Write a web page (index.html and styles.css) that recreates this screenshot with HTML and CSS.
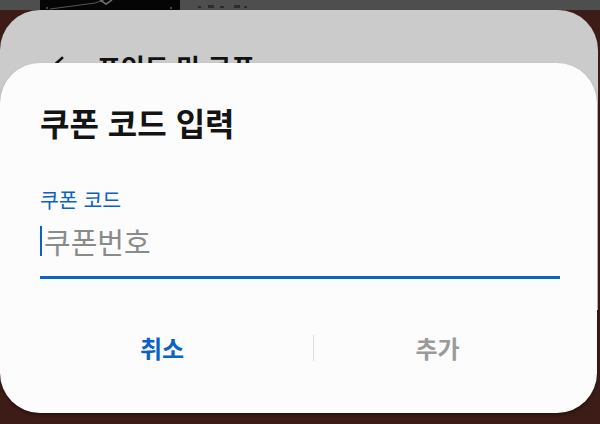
FILE: index.html
```html
<!DOCTYPE html>
<html lang="ko">
<head>
    <meta charset="UTF-8">
    <meta name="viewport" content="width=device-width, initial-scale=1.0">
    <title>쿠폰 코드 입력</title>
    <link rel="stylesheet" href="styles.css">
</head>
<body>
    <div class="screen">
        <div class="top-strip">
            <div class="thumb">
                <svg width="140" height="10" viewBox="0 0 140 10">
                    <path d="M10 9 L55 3 L64 0" stroke="#555" stroke-width="1" fill="none"/>
                    <path d="M60 0 L66 4 L72 0" stroke="#777" stroke-width="1.5" fill="none"/>
                    <rect x="6" y="7" width="2" height="2" fill="#444"/>
                    <rect x="130" y="7" width="2" height="2" fill="#444"/>
                </svg>
            </div>
            <svg class="top-marks" width="60" height="10" viewBox="0 0 60 10">
                <rect x="2" y="6" width="3" height="2" fill="#2c2c2c"/>
                <rect x="12" y="5" width="6" height="3" fill="#2c2c2c"/>
                <rect x="24" y="6" width="4" height="2" fill="#2c2c2c"/>
                <rect x="38" y="5" width="6" height="3" fill="#2c2c2c"/>
                <rect x="48" y="6" width="3" height="2" fill="#2c2c2c"/>
            </svg>
        </div>

        <div class="sheet">
            <div class="sheet-header">
                <svg class="back" width="20" height="26" viewBox="0 0 20 26">
                    <path d="M14 3 L3 13 L14 23" stroke="#111" stroke-width="2.6" fill="none" stroke-linecap="square"/>
                </svg>
                <span class="sheet-title">포인트 및 쿠폰</span>
            </div>
        </div>

        <div class="dialog">
            <h1 class="dialog-title">쿠폰 코드 입력</h1>

            <div class="field">
                <label class="field-label">쿠폰 코드</label>
                <div class="field-input">
                    <span class="caret"></span>
                    <span class="placeholder">쿠폰번호</span>
                </div>
            </div>

            <div class="actions">
                <button class="action action-cancel">취소</button>
                <span class="action-divider"></span>
                <button class="action action-add">추가</button>
            </div>
        </div>
    </div>
</body>
</html>
```

FILE: styles.css
```css
* {
    box-sizing: border-box;
}
html, body {
    margin: 0;
    padding: 0;
}
body {
    width: 600px;
    height: 424px;
    overflow: hidden;
    background-color: #3d1b16;
    font-family: "Noto Sans CJK KR", "Noto Sans", sans-serif;
}
.screen {
    position: relative;
    width: 600px;
    height: 424px;
}
.top-strip {
    height: 10px;
    background-color: #4e4e4e;
    display: flex;
    align-items: flex-start;
    overflow: hidden;
}
.thumb {
    margin-left: 40px;
    width: 140px;
    height: 10px;
    background-color: #050505;
}
.thumb svg,
.top-marks {
    display: block;
}
.top-marks {
    margin-left: 16px;
}
.sheet {
    width: 598px;
    height: 300px;
    background-color: #cbcbcb;
    border-radius: 40px 40px 0 0;
    padding: 40px 0 0 48px;
}
.sheet-header {
    display: flex;
    align-items: flex-start;
    gap: 29px;
}
.back {
    display: block;
    margin-top: 5px;
}
.sheet-title {
    font-size: 26px;
    line-height: 34px;
    font-weight: 700;
    color: #111;
}
.dialog {
    position: absolute;
    top: 63px;
    left: 0;
    width: 597px;
    height: 350px;
    background-color: #fcfcfc;
    border-radius: 40px;
    box-shadow: 0 2px 3px rgba(0,0,0,0.35);
    padding-top: 40px;
}
.dialog-title {
    margin: 0 0 0 40px;
    font-size: 32px;
    line-height: 38px;
    font-weight: 700;
    color: #141414;
}
.field {
    margin: 46px 37px 0 40px;
}
.field-label {
    display: block;
    font-size: 20.5px;
    line-height: 24px;
    color: #0a63c2;
}
.field-input {
    margin-top: 12px;
    display: flex;
    align-items: center;
    height: 56px;
    padding-bottom: 18px;
    border-bottom: 3px solid #0a66c6;
}
.caret {
    width: 2px;
    height: 30px;
    background-color: #0a63c2;
    margin-right: 2px;
}
.placeholder {
    font-size: 29px;
    line-height: 34px;
    color: #8a8a8a;
}
.actions {
    margin: 54px 0 0 11px;
    display: grid;
    grid-template-columns: 302px 1px 247px;
    align-items: center;
}
.action {
    border: none;
    background: none;
    padding: 0;
    font-family: inherit;
    font-size: 24px;
    line-height: 30px;
    font-weight: 700;
    cursor: pointer;
}
.action-cancel {
    color: #0a63c2;
}
.action-add {
    color: #9a9a9a;
}
.action-divider {
    width: 1px;
    height: 26px;
    background-color: #dddddd;
}
```
